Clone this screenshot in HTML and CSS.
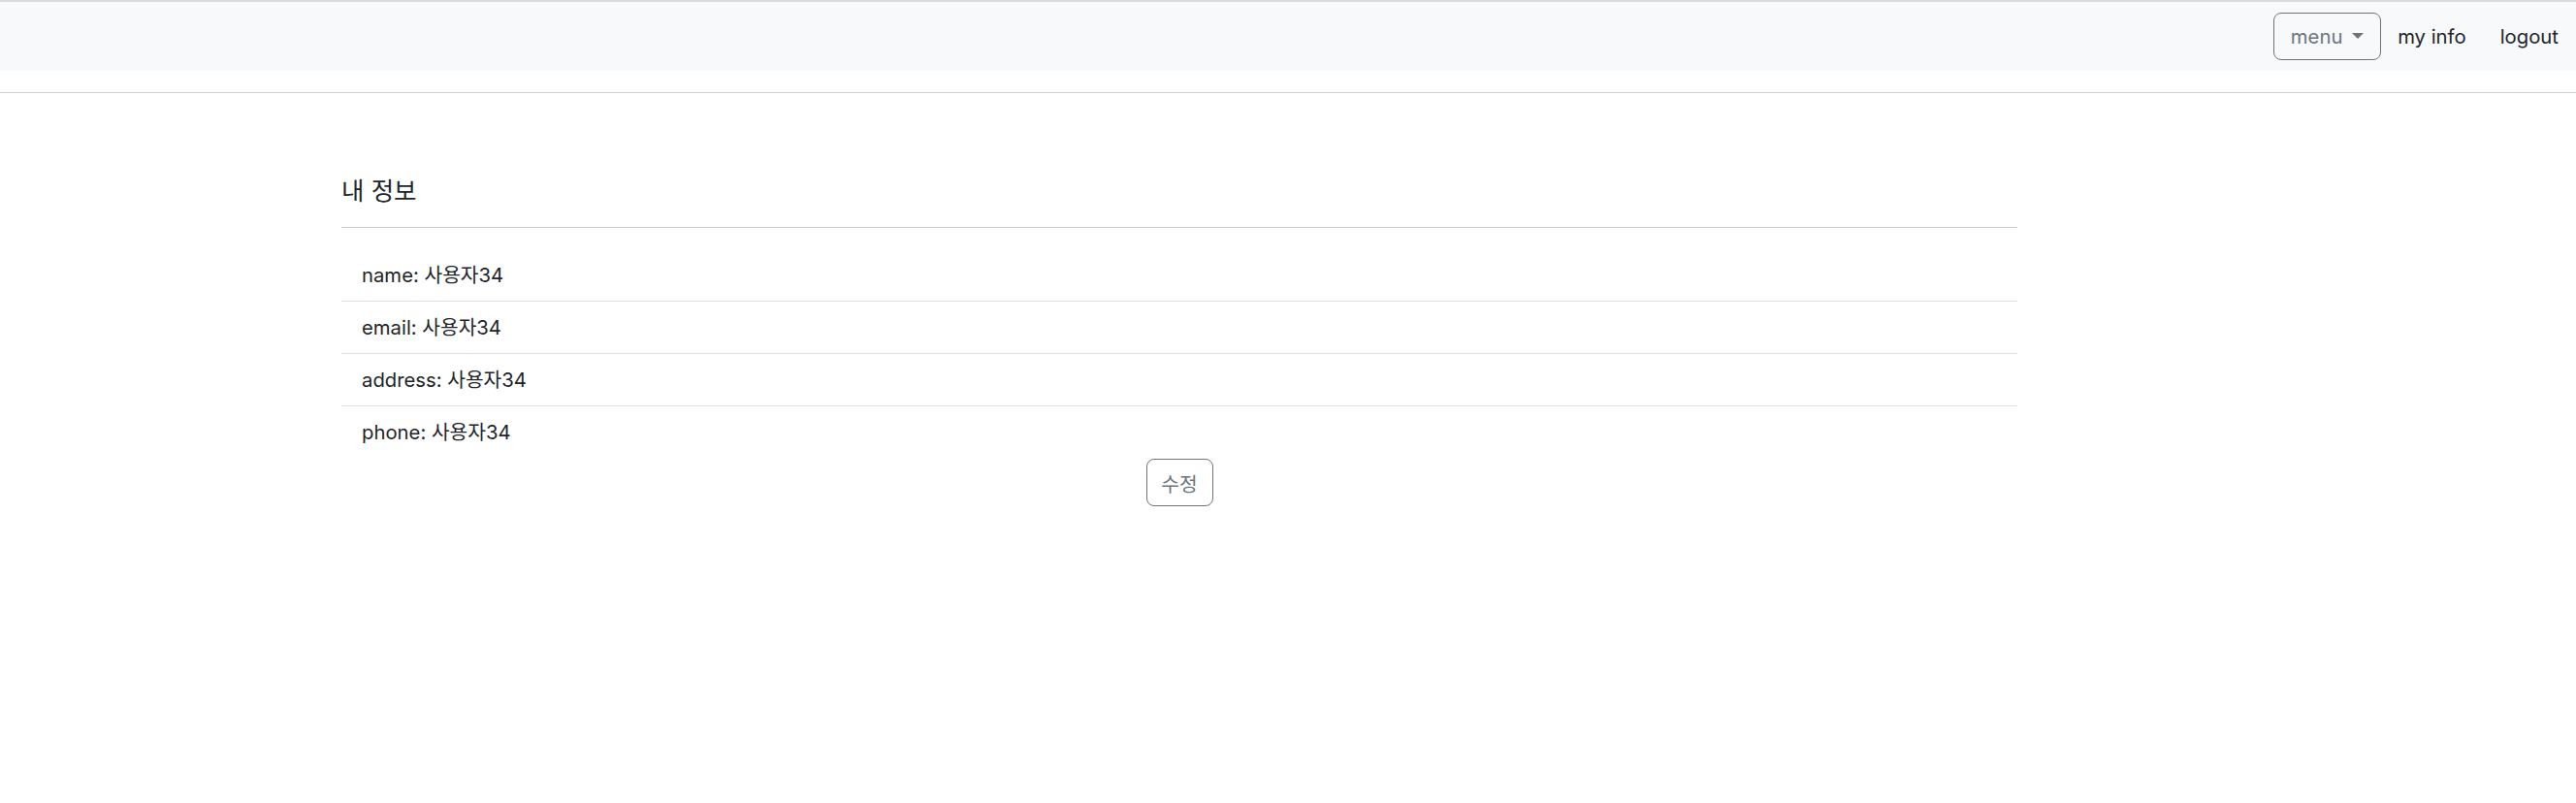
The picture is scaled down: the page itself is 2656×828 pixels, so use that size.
FILE: index.html
```html
<!DOCTYPE html>
<html lang="ko">
<head>
<meta charset="utf-8">
<title>내 정보</title>
<link rel="stylesheet" href="styles.css">
</head>
<body>
<div class="topline"></div>
<nav class="navbar">
  <button class="btn btn-menu">menu <span class="caret"></span></button>
  <a class="nav-link" href="#">my info</a>
  <a class="nav-link" href="#">logout</a>
</nav>
<hr class="sep">
<main class="content">
  <h5 class="title">내 정보</h5>
  <hr class="title-rule">
  <ul class="list">
    <li class="item">name: 사용자34</li>
    <li class="item">email: 사용자34</li>
    <li class="item">address: 사용자34</li>
    <li class="item">phone: 사용자34</li>
  </ul>
  <div class="actions">
    <button class="btn btn-edit">수정</button>
  </div>
</main>
</body>
</html>
```
FILE: styles.css
```css
html, body {
  margin: 0;
  padding: 0;
  background: #fff;
}
body {
  font-family: Inter, "Noto Sans CJK KR", "Noto Sans", sans-serif;
  font-size: 20.3px;
  color: #212529;
}
.topline {
  height: 2px;
  background: #dadbdd;
}
.navbar {
  height: 71px;
  background: #f8f9fa;
  display: flex;
  align-items: center;
  justify-content: flex-end;
  padding-right: 18px;
}
.btn {
  font-family: inherit;
  font-size: 20.3px;
  background: transparent;
  border: 1px solid #6c757d;
  border-radius: 8px;
  color: #6c757d;
  cursor: pointer;
  display: inline-flex;
  align-items: center;
  justify-content: center;
  box-sizing: border-box;
}
.btn-menu {
  width: 111px;
  height: 49px;
  padding: 0 16px;
  gap: 10px;
  margin-right: 17px;
}
.caret {
  width: 0;
  height: 0;
  border-top: 6px solid #6c757d;
  border-left: 6px solid transparent;
  border-right: 6px solid transparent;
  margin-top: -2px;
}
.nav-link {
  color: #212529;
  text-decoration: none;
  line-height: 32px;
}
.nav-link + .nav-link {
  margin-left: 35px;
}
.sep {
  margin: 22px 0 0 0;
  border: 0;
  border-top: 1px solid #cdcecf;
  height: 0;
}
.content {
  margin-left: 352px;
  width: 1728px;
  padding-top: 85px;
}
.title {
  margin: 0;
  font-size: 25.5px;
  font-weight: 400;
  line-height: 32px;
}
.title-rule {
  margin: 21px 0 22px 0;
  border: 0;
  border-top: 1px solid #cdcecf;
  height: 0;
}
.list {
  list-style: none;
  margin: 0;
  padding: 0;
}
.item {
  height: 53px;
  line-height: 53px;
  padding: 0 21px;
  border-top: 1px solid #dee2e6;
}
.item:first-child {
  border-top: 0;
}
.actions {
  display: flex;
  justify-content: center;
  padding-top: 1px;
}
.btn-edit {
  width: 69px;
  height: 49px;
  padding: 0;
}
```
